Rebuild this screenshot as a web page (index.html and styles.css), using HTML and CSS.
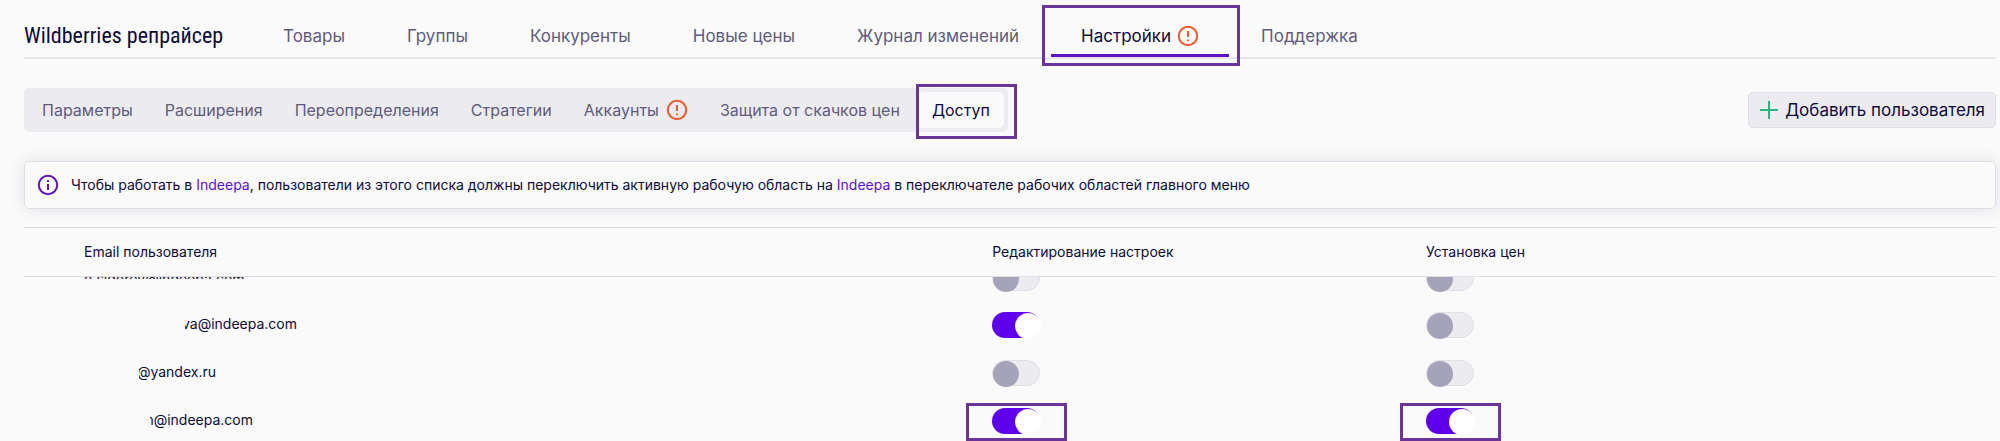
FILE: index.html
```
<!DOCTYPE html>
<html lang="ru">
<head>
    <meta charset="UTF-8">
    <meta name="viewport" content="width=device-width, initial-scale=1.0">
    <title>Wildberries репрайсер</title>
    <link rel="stylesheet" href="styles.css">
</head>
<body>
    <header class="header">
        <h1 class="logo">Wildberries репрайсер</h1>
        <nav class="nav">
            <a href="#">Товары</a>
            <a href="#">Группы</a>
            <a href="#">Конкуренты</a>
            <a href="#">Новые цены</a>
            <a href="#">Журнал изменений</a>
            <a href="#" class="active marked">Настройки
                <svg class="warn" viewBox="0 0 22 22"><circle cx="11" cy="11" r="9.2"/><path d="M11 6v6M11 14.4v1.8"/></svg>
            </a>
            <a href="#">Поддержка</a>
        </nav>
    </header>

    <main>
        <div class="toolbar">
            <nav class="subnav">
                <a href="#">Параметры</a>
                <a href="#">Расширения</a>
                <a href="#">Переопределения</a>
                <a href="#">Стратегии</a>
                <a href="#">Аккаунты
                    <svg class="warn" viewBox="0 0 22 22"><circle cx="11" cy="11" r="9.2"/><path d="M11 6v6M11 14.4v1.8"/></svg>
                </a>
                <a href="#">Защита от скачков цен</a>
                <a href="#" class="active marked">Доступ</a>
            </nav>
            <button type="button" class="add-btn">
                <svg viewBox="0 0 20 20"><path d="M10 1v18M1 10h18"/></svg>
                Добавить пользователя
            </button>
        </div>

        <div class="info">
            <svg viewBox="0 0 22 22"><circle cx="11" cy="11" r="9.2"/><path d="M11 10v6M11 6v2"/></svg>
            <p>Чтобы работать в <a href="#">Indeepa</a>, пользователи из этого списка должны переключить активную рабочую область на <a href="#">Indeepa</a> в переключателе рабочих областей главного меню</p>
        </div>

        <table class="users">
            <thead>
                <tr>
                    <th class="col-email">Email пользователя</th>
                    <th class="col-edit">Редактирование настроек</th>
                    <th class="col-price">Установка цен</th>
                </tr>
            </thead>
            <tbody>
                <!-- строка, наполовину ушедшая под шапку таблицы -->
                <tr class="scrolled">
                    <td><div class="cut cut-text"><span>o.sidorov@indeepa.com</span></div></td>
                    <td><div class="cut"><input type="checkbox" class="switch" aria-label="Редактирование настроек"></div></td>
                    <td><div class="cut"><input type="checkbox" class="switch" aria-label="Установка цен"></div></td>
                </tr>
                <tr>
                    <td><span class="mail mail-long"><span>va@indeepa.com</span></span></td>
                    <td><input type="checkbox" class="switch" aria-label="Редактирование настроек" checked></td>
                    <td><input type="checkbox" class="switch" aria-label="Установка цен"></td>
                </tr>
                <tr>
                    <td><span class="mail mail-short"><span>@yandex.ru</span></span></td>
                    <td><input type="checkbox" class="switch" aria-label="Редактирование настроек"></td>
                    <td><input type="checkbox" class="switch" aria-label="Установка цен"></td>
                </tr>
                <tr>
                    <td><span class="mail mail-mid"><span>n@indeepa.com</span></span></td>
                    <td><span class="marked"><input type="checkbox" class="switch" aria-label="Редактирование настроек" checked></span></td>
                    <td><span class="marked"><input type="checkbox" class="switch" aria-label="Установка цен" checked></span></td>
                </tr>
            </tbody>
        </table>
    </main>
</body>
</html>
```
FILE: styles.css
```
* {
    box-sizing: border-box;
}
body {
    margin: 0;
    padding: 0 4px 0 24px;
    height: 100vh;
    overflow: hidden;
    background: #fafafa;
    color: #0d0a3c;
    font-family: Inter, "Noto Sans", sans-serif;
    font-size: 14px;
}
a {
    color: inherit;
    text-decoration: none;
}
svg {
    fill: none;
    stroke-width: 2;
    flex-shrink: 0;
}

/* верхнее меню */
.header {
    display: flex;
    height: 59px;
    border-bottom: 2px solid #e6e6ea;
}
.logo {
    margin: 0;
    width: 229px;
    padding-top: 16px;
    font-family: "Liberation Sans Narrow", "Roboto Condensed", Roboto, sans-serif;
    font-size: 22px;
    line-height: 40px;
    font-weight: 400;
    white-space: nowrap;
}
.nav {
    display: flex;
    gap: 2px;
}
.nav a {
    position: relative;
    display: flex;
    align-items: center;
    gap: 6px;
    padding: 18px 30px 0;
    border-bottom: 3px solid transparent;
    font-size: 17px;
    color: #5f5c7d;
    white-space: nowrap;
}
.nav a.active {
    color: #0d0a3c;
    border-bottom-color: #5b14c0;
}
.warn {
    width: 22px;
    height: 22px;
    stroke: #f0592b;
}

/* фиолетовые рамки */
.marked {
    position: relative;
}
.marked::after {
    content: "";
    position: absolute;
    border: 3px solid #6b3499;
    pointer-events: none;
}
.nav .marked::after {
    inset: 5px -11px -12px -9px;
}
.subnav .marked::after {
    inset: -8px -13px -11px -2px;
}
td .marked::after {
    inset: -5px -27px -7px -26px;
}

/* вкладки настроек */
.toolbar {
    display: flex;
    justify-content: space-between;
    align-items: center;
    margin-top: 29px;
}
.subnav {
    display: flex;
    gap: 4px;
    height: 44px;
    padding: 4px;
    background: #ecebf0;
    border-radius: 5px;
}
.subnav a {
    display: flex;
    align-items: center;
    gap: 7px;
    padding: 0 14px;
    font-size: 16px;
    color: #5f5c7d;
    border-radius: 5px;
    white-space: nowrap;
}
.subnav a.active {
    color: #0d0a3c;
    background: #fafafa;
}
.add-btn {
    display: flex;
    align-items: center;
    gap: 6px;
    height: 36px;
    padding: 0 10px;
    border: 1px solid #dfdee6;
    border-radius: 5px;
    background: #ecebf0;
    color: #0d0a3c;
    font: inherit;
    font-size: 17px;
}
.add-btn svg {
    width: 20px;
    height: 20px;
    stroke: #2fb380;
}

/* подсказка */
.info {
    display: flex;
    align-items: center;
    gap: 12px;
    height: 48px;
    margin-top: 29px;
    padding: 0 12px;
    border: 1px solid #dfdee6;
    border-radius: 5px;
    box-shadow: 0 0 16px rgba(40, 30, 90, 0.12);
}
.info svg {
    width: 22px;
    height: 22px;
    stroke: #5b14c0;
}
.info p {
    margin: 0;
    padding-bottom: 2px;
}
.info a {
    color: #5c0ee0;
}

/* таблица пользователей */
.users {
    width: 100%;
    margin-top: 18px;
    table-layout: fixed;
    border-collapse: collapse;
}
.users th {
    height: 49px;
    padding: 0 0 2px;
    border-top: 1px solid #dfdee2;
    border-bottom: 1px solid #dfdee2;
    font-weight: 400;
    text-align: left;
}
.users .col-email {
    width: 49.1%;
    padding-left: 60px;
}
.users .col-edit {
    width: 22%;
}
.users td {
    height: 48px;
    padding: 0;
}
.users td:first-child {
    padding-left: 60px;
}
.users .scrolled td {
    height: 24px;
    vertical-align: top;
}
.cut {
    display: flex;
    align-items: flex-end;
    height: 15px;
    padding-bottom: 1px;
    overflow: hidden;
}
.cut-text {
    height: 2px;
    padding: 0;
    align-items: center;
}
.mail {
    display: flex;
    justify-content: flex-end;
    padding-bottom: 2px;
    overflow: hidden;
}
.mail-long {
    width: 112px;
    margin-left: 101px;
}
.mail-short {
    width: 77px;
    margin-left: 55px;
}
.mail-mid {
    width: 103px;
    margin-left: 66px;
}
.users .marked {
    display: inline-block;
    vertical-align: middle;
}
.switch {
    appearance: none;
    display: block;
    flex-shrink: 0;
    width: 48px;
    height: 26px;
    margin: 0;
    border: 1px solid #e0dfe6;
    border-radius: 13px;
    background: #ecebf0;
}
.switch::before {
    content: "";
    display: block;
    width: 26px;
    height: 26px;
    border-radius: 50%;
    background: #a5a3b8;
}
.switch:checked {
    border-color: transparent;
    background: #5f00eb;
    background-clip: border-box;
}
.switch:checked::before {
    margin-left: 22px;
    background: #fff;
}
```
